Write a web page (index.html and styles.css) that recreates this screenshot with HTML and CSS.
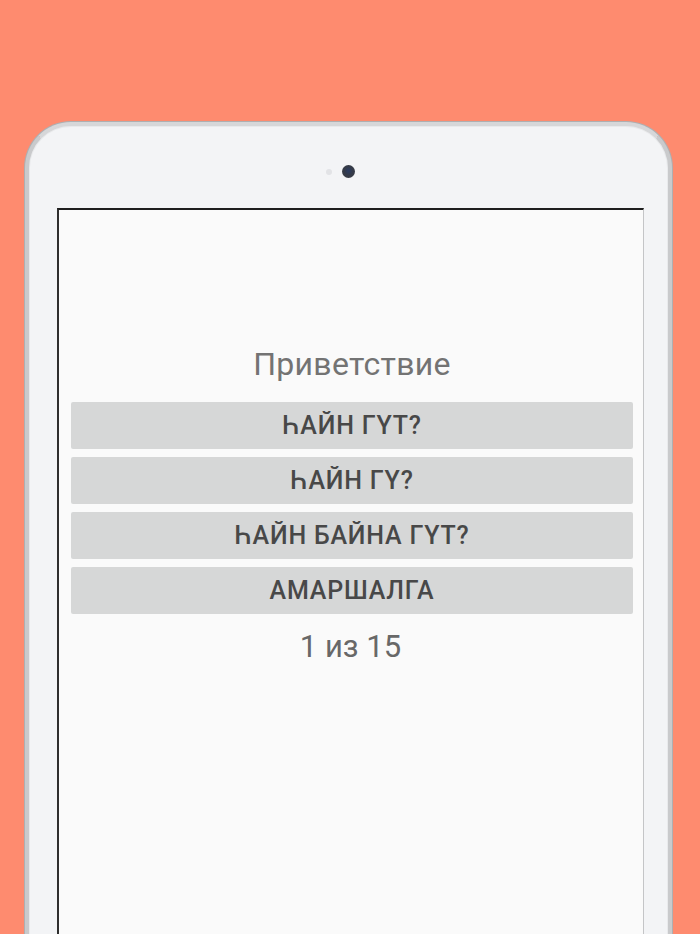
FILE: index.html
```html
<!DOCTYPE html>
<html lang="ru">
<head>
<meta charset="utf-8">
<title>Приветствие</title>
<link rel="stylesheet" href="styles.css">
</head>
<body>
<div class="device">
  <div class="sensors">
    <span class="sensor"></span>
    <span class="camera"></span>
  </div>
  <div class="screen">
    <h1 class="title">Приветствие</h1>
    <div class="answers">
      <button class="answer">ҺАЙН ГҮТ?</button>
      <button class="answer">ҺАЙН ГҮ?</button>
      <button class="answer">ҺАЙН БАЙНА ГҮТ?</button>
      <button class="answer">АМАРШАЛГА</button>
    </div>
    <p class="progress">1 из 15</p>
  </div>
</div>
</body>
</html>
```

FILE: styles.css
```css
html, body {
  margin: 0;
  padding: 0;
}
body {
  width: 700px;
  height: 934px;
  overflow: hidden;
  background: #fe8b6f;
  font-family: Roboto, "Noto Sans", sans-serif;
}
.device {
  box-sizing: border-box;
  margin: 122px 0 0 25px;
  width: 647px;
  height: 900px;
  border: 4px solid #c9cacc;
  border-top-color: #d6d7d9;
  border-bottom: none;
  border-radius: 46px 46px 0 0;
  background: #f3f4f6;
  box-shadow: inset 0 0 0 1px #e9eaec, 0 0 0 1px #aeafb1;
  display: flex;
  flex-direction: column;
}
.sensors {
  height: 82px;
  display: flex;
  justify-content: center;
  align-items: flex-start;
  gap: 10px;
  padding-right: 17px;
  box-sizing: border-box;
  padding-top: 39px;
}
.sensor {
  width: 6px;
  height: 6px;
  border-radius: 50%;
  background: #e2e3e6;
  margin-top: 4px;
}
.camera {
  width: 13px;
  height: 13px;
  border-radius: 50%;
  background: radial-gradient(circle at 50% 45%, #2a3b62 0, #343a48 45%, #3b3d43 100%);
}
.screen {
  flex: 1;
  margin: 0 24px 0 28px;
  background: #fafafa;
  border-top: 2px solid #1e1e1e;
  border-left: 2px solid #2e2e2e;
  border-right: 1px solid #c4c5c7;
  display: flex;
  flex-direction: column;
  align-items: stretch;
  padding: 136px 10px 0 12px;
}
.title {
  margin: 0;
  text-align: center;
  font-weight: 400;
  font-size: 32px;
  letter-spacing: 0.3px;
  line-height: 36px;
  color: #737373;
}
.answers {
  margin-top: 20px;
  display: flex;
  flex-direction: column;
  gap: 8px;
}
.answer {
  height: 47px;
  border: none;
  border-radius: 2px;
  background: #d6d7d7;
  font-family: Roboto, "Noto Sans", sans-serif;
  font-weight: 500;
  font-size: 25px;
  letter-spacing: 0.8px;
  color: #484848;
  padding: 0;
  text-align: center;
}
.progress {
  margin: 15px 3px 0 0;
  text-align: center;
  font-size: 31px;
  line-height: 36px;
  color: #686868;
}
```
